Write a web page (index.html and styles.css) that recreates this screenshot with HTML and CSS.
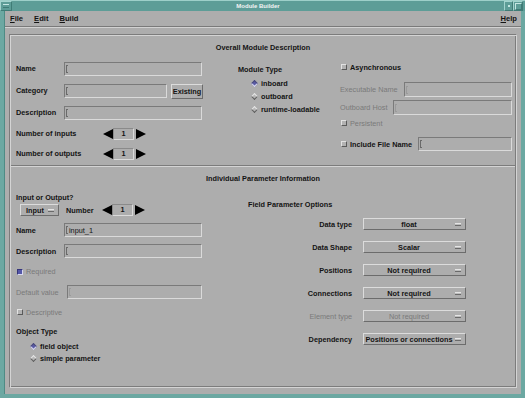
FILE: index.html
```html
<!DOCTYPE html>
<html lang="en">
<head>
  <meta charset="UTF-8">
  <title>Module Builder</title>
  <link rel="stylesheet" href="styles.css">
</head>
<body>
<div class="window">
  <div class="titlebar">
    <span class="tb-btn tb-menu"></span>
    <span class="tb-title">Module Builder</span>
    <span class="tb-btn tb-min"></span>
    <span class="tb-btn tb-max"></span>
  </div>

  <div class="client">
    <div class="menubar">
      <span class="menu"><u>F</u>ile</span>
      <span class="menu"><u>E</u>dit</span>
      <span class="menu"><u>B</u>uild</span>
      <span class="menu help"><u>H</u>elp</span>
    </div>

    <div class="panel">
      <div class="section-title">Overall Module Description</div>

      <div class="top-grid">
        <!-- name / category / counts -->
        <div class="col main-col">
          <div class="row"><span class="lbl lbl-short">Name</span><span class="field field-long"><i class="caret"></i></span></div>
          <div class="row"><span class="lbl lbl-short">Category</span><span class="field field-cat"><i class="caret"></i></span><span class="button">Existing</span></div>
          <div class="row"><span class="lbl lbl-short">Description</span><span class="field field-long"><i class="caret"></i></span></div>
          <div class="row row-spin"><span class="lbl lbl-count">Number of inputs</span>
            <span class="spin"><i class="arrow-l"></i><span class="spin-val">1</span><i class="arrow-r"></i></span></div>
          <div class="row row-spin"><span class="lbl lbl-count">Number of outputs</span>
            <span class="spin"><i class="arrow-l"></i><span class="spin-val">1</span><i class="arrow-r"></i></span></div>
        </div>

        <!-- module type -->
        <div class="col type-col">
          <div class="row">Module Type</div>
          <div class="radios">
            <div class="radio on"><i class="diamond"></i>inboard</div>
            <div class="radio"><i class="diamond"></i>outboard</div>
            <div class="radio"><i class="diamond"></i>runtime-loadable</div>
          </div>
        </div>

        <!-- execution options -->
        <div class="col opts-col">
          <div class="row"><i class="check"></i>Asynchronous</div>
          <div class="row row-exec off"><span class="lbl">Executable Name</span><span class="field field-fill"><i class="caret"></i></span></div>
          <div class="row row-host off"><span class="lbl">Outboard Host</span><span class="field field-fill"><i class="caret"></i></span></div>
          <div class="row row-pers off"><i class="check"></i>Persistent</div>
          <div class="row row-incl"><i class="check"></i><span class="lbl">Include File Name</span><span class="field field-fill"><i class="caret"></i></span></div>
        </div>
      </div>

      <div class="separator"></div>

      <div class="section-title">Individual Parameter Information</div>

      <div class="bottom-grid">
        <div class="col param-col">
          <div class="row row-head">Input or Output?</div>
          <div class="row row-io">
            <span class="option io-menu"><span class="opt-text">Input</span><i class="ind"></i></span>
            <span class="lbl lbl-num">Number</span>
            <span class="spin"><i class="arrow-l"></i><span class="spin-val">1</span><i class="arrow-r"></i></span>
          </div>
          <div class="row"><span class="lbl lbl-short">Name</span><span class="field field-long"><i class="caret"></i>input_1</span></div>
          <div class="row"><span class="lbl lbl-short">Description</span><span class="field field-long"><i class="caret"></i></span></div>
          <div class="row row-req off"><i class="check on"></i>Required</div>
          <div class="row off"><span class="lbl lbl-def">Default value</span><span class="field field-def"><i class="caret"></i></span></div>
          <div class="row row-small off"><i class="check"></i>Descriptive</div>
          <div class="row row-small">Object Type</div>
          <div class="obj-radios">
            <div class="radio on"><i class="diamond"></i>field object</div>
            <div class="radio"><i class="diamond"></i>simple parameter</div>
          </div>
        </div>

        <div class="col field-col">
          <div class="row row-fhead">Field Parameter Options</div>
          <div class="prow"><span class="plbl">Data type</span><span class="option"><span class="opt-text">float</span><i class="ind"></i></span></div>
          <div class="prow"><span class="plbl">Data Shape</span><span class="option"><span class="opt-text">Scalar</span><i class="ind"></i></span></div>
          <div class="prow"><span class="plbl">Positions</span><span class="option"><span class="opt-text">Not required</span><i class="ind"></i></span></div>
          <div class="prow"><span class="plbl">Connections</span><span class="option"><span class="opt-text">Not required</span><i class="ind"></i></span></div>
          <div class="prow off"><span class="plbl">Element type</span><span class="option"><span class="opt-text">Not required</span><i class="ind"></i></span></div>
          <div class="prow"><span class="plbl">Dependency</span><span class="option"><span class="opt-text">Positions or connections</span><i class="ind"></i></span></div>
        </div>
      </div>
    </div>
  </div>
</div>
</body>
</html>
```

FILE: styles.css
```css
/* Reset */
* {
  margin: 0;
  padding: 0;
  box-sizing: border-box;
}

body {
  background-color: #6ca8a2;
  font-family: "Liberation Sans", Arial, sans-serif;
  font-size: 7.3px;
  font-weight: bold;
  color: #141414;
}

i {
  font-style: normal;
}

/* Window frame */
.window {
  width: 525px;
  height: 398px;
  display: flex;
  flex-direction: column;
  background-color: #6ca8a2;
}

.titlebar {
  height: 11px;
  display: flex;
  align-items: center;
  background-color: #5d9d97;
  border-top: 1px solid #9dcfc9;
}

.tb-title {
  flex: 1;
  text-align: center;
  color: #f4f4f4;
  font-size: 6px;
  line-height: 10px;
}

.tb-btn {
  height: 10px;
  border: 1px solid;
  border-color: #a2d3cd #3f7c76 #3f7c76 #a2d3cd;
  display: flex;
  align-items: center;
  justify-content: center;
}

.tb-menu {
  width: 12px;
}

.tb-menu::after {
  content: "";
  width: 6px;
  height: 2px;
  border-top: 1px solid #c4e6e2;
  border-bottom: 1px solid #3f7c76;
}

.tb-min {
  width: 9px;
}

.tb-min::after {
  content: "";
  width: 2px;
  height: 2px;
  background-color: #c4e6e2;
}

.tb-max {
  width: 10px;
  margin-right: 2px;
}

.tb-max::after {
  content: "";
  width: 5px;
  height: 5px;
  border: 1px solid;
  border-color: #c4e6e2 #3f7c76 #3f7c76 #c4e6e2;
}

.client {
  flex: 1;
  margin: 0 4px 4px 4px;
  background-color: #adadad;
  display: flex;
  flex-direction: column;
  border-left: 1px solid #4e8b85;
}

/* Menu bar */
.menubar {
  height: 16px;
  display: flex;
  align-items: center;
  padding: 0 4px 0 5px;
  font-size: 7.6px;
  border-bottom: 1px solid #7a7a7a;
  box-shadow: 0 1px 0 #d2d2d2;
}

.menu {
  margin-right: 11px;
}

.menu u {
  text-decoration-thickness: 1px;
  text-underline-offset: 1px;
}

.menu.help {
  margin-left: auto;
  margin-right: 0;
}

/* Main etched panel */
.panel {
  flex: 1;
  margin: 7px 4px 6px 4px;
  border: 1px solid;
  border-color: #7c7c7c #d4d4d4 #d4d4d4 #7c7c7c;
  box-shadow: inset 1px 1px 0 #d4d4d4, inset -1px -1px 0 #7c7c7c;
  padding: 1px;
  display: flex;
  flex-direction: column;
}

.section-title {
  height: 12px;
  line-height: 12px;
  margin-top: 6px;
  text-align: center;
}

.separator {
  margin-top: 5px;
  height: 2px;
  border-top: 1px solid #7c7c7c;
  border-bottom: 1px solid #d4d4d4;
}

.col {
  display: flex;
  flex-direction: column;
}

.row {
  display: flex;
  align-items: center;
  height: 14px;
  white-space: nowrap;
}

.lbl {
  white-space: nowrap;
}

.off {
  color: #7a7a7a;
  font-weight: normal;
}

/* Top section */
.top-grid {
  margin-top: 6px;
  padding-left: 5px;
  display: grid;
  grid-template-columns: 222px 102px 172px;
}

.main-col {
  padding-top: 2px;
  gap: 8px;
}

.main-col .row {
  align-items: flex-start;
  line-height: 14px;
}

.main-col .row-spin {
  height: 12px;
  line-height: 12px;
  align-items: center;
}

.lbl-short {
  width: 48px;
}

.lbl-count {
  width: 87px;
}

.type-col {
  padding-top: 2px;
}

.radios {
  margin-top: 1px;
  padding-left: 13px;
}

.radio {
  display: flex;
  align-items: center;
  height: 13px;
  white-space: nowrap;
}

.diamond {
  width: 5px;
  height: 5px;
  margin: 0 4px 0 1px;
  transform: rotate(45deg);
  border: 1px solid;
  border-color: #e6e6e6 #5e5e5e #5e5e5e #e6e6e6;
  background-color: #b6b6b6;
}

.radio.on .diamond {
  border-color: #4a4a7a #dcdcf0 #dcdcf0 #4a4a7a;
  background-color: #5a5ca6;
}

.check {
  width: 6px;
  height: 6px;
  margin: 0 3px 0 1px;
  border: 1px solid;
  border-color: #e2e2e2 #5a5a5a #5a5a5a #e2e2e2;
  background-color: #b2b2b2;
  flex-shrink: 0;
}

.check.on {
  border-color: #35357a #d8d8ee #d8d8ee #35357a;
  background-color: #5457a8;
}

.opts-col .row .lbl {
  margin-right: 6px;
}

.opts-col .row-exec,
.opts-col .row-host {
  height: 15px;
}

.row-exec {
  margin-top: 8px;
}

.row-host {
  margin-top: 3px;
}

.row-pers {
  margin-top: 1px;
}

.row-incl {
  margin-top: 7px;
}

/* Widgets */
.field {
  display: flex;
  align-items: center;
  height: 14px;
  padding-left: 1px;
  border: 1px solid;
  border-color: #7a7a7a #dadada #dadada #7a7a7a;
  font-weight: normal;
  color: #141414;
}

.field-long {
  width: 138px;
}

.field-cat {
  width: 103px;
}

.field-fill {
  flex: 1;
  align-self: stretch;
  height: auto;
}

.field-def {
  width: 135px;
}

.caret {
  width: 2px;
  height: 8px;
  margin-right: 1px;
  border: 1px solid #6a6a6a;
  border-right: none;
}

.off .caret {
  border-color: #9a9a9a;
}

.button {
  margin-left: 4px;
  width: 32px;
  height: 15px;
  line-height: 13px;
  text-align: center;
  border: 1px solid;
  border-color: #dcdcdc #6c6c6c #6c6c6c #dcdcdc;
}

.spin {
  display: flex;
  align-items: center;
}

.arrow-l {
  width: 0;
  height: 0;
  border-top: 5px solid transparent;
  border-bottom: 5px solid transparent;
  border-right: 10px solid #000;
}

.arrow-r {
  width: 0;
  height: 0;
  margin-left: 2px;
  border-top: 5px solid transparent;
  border-bottom: 5px solid transparent;
  border-left: 10px solid #000;
}

.spin-val {
  width: 21px;
  height: 12px;
  line-height: 10px;
  text-align: center;
  border: 1px solid;
  border-color: #8a8a8a #dadada #dadada #8a8a8a;
}

.option {
  display: flex;
  align-items: center;
  width: 103px;
  height: 12px;
  border: 1px solid;
  border-color: #dcdcdc #6c6c6c #6c6c6c #dcdcdc;
}

.opt-text {
  flex: 1;
  text-align: center;
  white-space: nowrap;
}

.ind {
  width: 6px;
  height: 3px;
  margin: 0 4px 0 1px;
  border-top: 1px solid #e4e4e4;
  border-bottom: 1px solid #6a6a6a;
  background-color: #bcbcbc;
  flex-shrink: 0;
}

/* Bottom section */
.bottom-grid {
  padding-left: 5px;
  display: grid;
  grid-template-columns: 232px 218px;
}

.param-col .row {
  margin-top: 7px;
}

.param-col .row-head {
  margin-top: 6px;
  height: 12px;
}

.param-col .row-io {
  margin-top: 1px;
  height: 12px;
}

.io-menu {
  width: 39px;
  margin-left: 4px;
}

.io-menu .opt-text {
  padding-left: 2px;
}

.lbl-num {
  width: 36px;
  margin-left: 7px;
}

.param-col .row-req {
  height: 13px;
}

.lbl-def {
  width: 51px;
}

.param-col .row-small {
  height: 12px;
}

.obj-radios {
  margin-top: 3px;
  padding-left: 14px;
}

.obj-radios .radio {
  height: 12px;
}

.row-fhead {
  margin-top: 13px;
  height: 12px;
}

.prow {
  display: flex;
  align-items: center;
  height: 12px;
  margin-top: 11px;
}

.row-fhead + .prow {
  margin-top: 8px;
}

.plbl {
  width: 104px;
  margin-right: 11px;
  text-align: right;
  white-space: nowrap;
}

.prow.off .option {
  color: #7a7a7a;
}
```
